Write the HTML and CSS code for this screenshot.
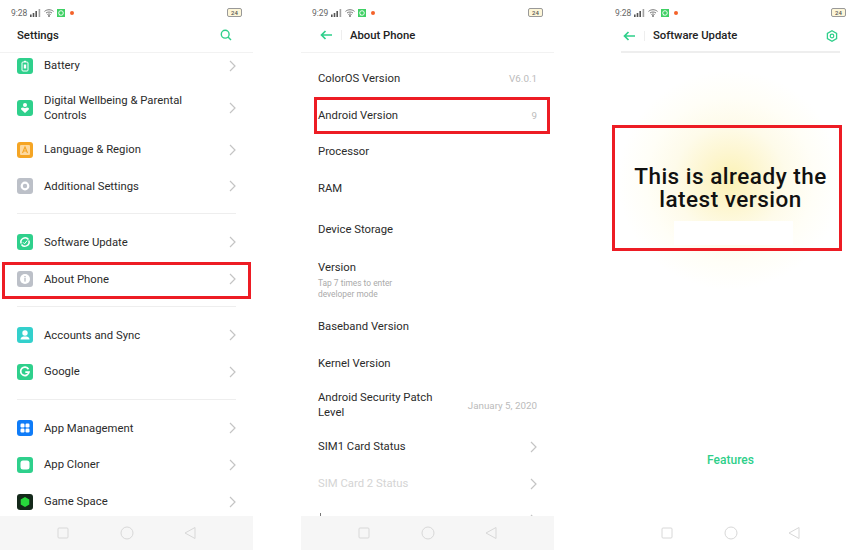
FILE: index.html
```html
<!DOCTYPE html>
<html lang="en">
<head>
    <meta charset="UTF-8">
    <meta name="viewport" content="width=device-width, initial-scale=1.0">
    <title>About Phone steps</title>
    <link rel="stylesheet" href="styles.css">
</head>
<body>
    <svg class="sprites" width="0" height="0">
        <symbol id="signal" viewBox="0 0 11 8">
            <rect x="0" y="5.5" width="1.6" height="2.5"/>
            <rect x="2.7" y="4" width="1.6" height="4"/>
            <rect x="5.4" y="2" width="1.6" height="6"/>
            <rect x="8.6" y="0" width="1.6" height="8" opacity=".55"/>
        </symbol>
        <symbol id="wifi" viewBox="0 0 10 8">
            <path d="M.5 2.4C3 .2 7 .2 9.500 2.400M2 4C3.700 2.700 6.300 2.700 8 4M3.400 5.500C4.300 4.900 5.700 4.900 6.600 5.500" fill="none" stroke="#666" stroke-width=".9"/>
            <circle cx="5" cy="7" r=".9" fill="#666"/>
        </symbol>
        <symbol id="chat" viewBox="0 0 8 8">
            <rect width="8" height="8" fill="#3fd064"/>
            <circle cx="4" cy="4" r="2.300" fill="none" stroke="#fff" stroke-width=".9"/>
            <path d="M1.700 6.500 2.200 5 3.200 6Z" fill="#fff"/>
        </symbol>
        <symbol id="chevron" viewBox="0 0 7 12">
            <path d="M1 1 6 6 1 11" fill="none" stroke="#c4c4c4" stroke-width="1.200"/>
        </symbol>
        <symbol id="back" viewBox="0 0 12 10">
            <path d="M5.500 1 1.500 5 5.500 9M1.500 5H12" fill="none" stroke="#2ecf8a" stroke-width="1.700"/>
        </symbol>
        <symbol id="square" viewBox="0 0 14 14">
            <rect x="2" y="2" width="10" height="10" rx="1" fill="none" stroke="#d8d8d8"/>
        </symbol>
        <symbol id="circle" viewBox="0 0 14 14">
            <circle cx="7" cy="7" r="6" fill="none" stroke="#d8d8d8"/>
        </symbol>
        <symbol id="triangle" viewBox="0 0 14 14">
            <path d="M12 1.500V12.500L2 7Z" fill="none" stroke="#d8d8d8"/>
        </symbol>
    </svg>

    <div class="screen screen-settings">
        <div class="status">
            <span class="time">9:28</span>
            <svg class="signal"><use href="#signal"/></svg>
            <svg class="wifi"><use href="#wifi"/></svg>
            <svg class="chat"><use href="#chat"/></svg>
            <span class="dot"></span>
            <span class="battery">24</span>
        </div>
        <div class="header">
            <span class="title title-plain">Settings</span>
            <svg class="header-icon" viewBox="0 0 12 12"><circle cx="5.200" cy="5.200" r="3.900" fill="none" stroke="#2ecf8a" stroke-width="1.400"/><path d="M8 8 11 11" stroke="#2ecf8a" stroke-width="1.400"/></svg>
        </div>
        <div class="list settings-list">
            <div class="row">
                <span class="app-icon green"><svg viewBox="0 0 16 16"><rect x="5" y="4" width="6" height="9" rx="1" fill="none" stroke="#fff"/><rect x="7" y="2.800" width="2" height="1.200" fill="#fff"/><rect x="6.800" y="6.500" width="2.400" height="4" fill="#fff"/></svg></span>
                <span class="label">Battery</span>
                <svg class="chevron"><use href="#chevron"/></svg>
            </div>
            <div class="row row-two">
                <span class="app-icon green"><svg viewBox="0 0 16 16"><circle cx="8" cy="5" r="2" fill="#fff"/><path d="M8 13 4.200 9.500C3.400 8 5.500 6.800 8 8.200 10.500 6.800 12.600 8 11.800 9.500Z" fill="#fff"/></svg></span>
                <span class="label">Digital Wellbeing &amp; Parental Controls</span>
                <svg class="chevron"><use href="#chevron"/></svg>
            </div>
            <div class="row">
                <span class="app-icon orange"><svg viewBox="0 0 16 16"><rect x="3" y="3" width="10" height="10" rx="1" fill="#fdd9a0"/><path d="M5.500 11 8 5 10.500 11M6.400 9H9.600" fill="none" stroke="#f5a524" stroke-width="1.100"/></svg></span>
                <span class="label">Language &amp; Region</span>
                <svg class="chevron"><use href="#chevron"/></svg>
            </div>
            <div class="row">
                <span class="app-icon grey"><svg viewBox="0 0 16 16"><circle cx="8" cy="8" r="3.300" fill="none" stroke="#fff" stroke-width="2.200"/></svg></span>
                <span class="label">Additional Settings</span>
                <svg class="chevron"><use href="#chevron"/></svg>
            </div>
            <div class="divider"></div>
            <div class="row">
                <span class="app-icon green"><svg viewBox="0 0 16 16"><path d="M4.200 9.500A4.200 4.200 0 0 1 11.500 5.500M11.800 6.500A4.200 4.200 0 0 1 4.500 10.500" fill="none" stroke="#fff" stroke-width="1.500"/><path d="M6 8.300 7.500 9.800 10.200 6.500" fill="none" stroke="#fff"/></svg></span>
                <span class="label">Software Update</span>
                <svg class="chevron"><use href="#chevron"/></svg>
            </div>
            <div class="row">
                <span class="app-icon grey"><svg viewBox="0 0 16 16"><circle cx="8" cy="8" r="5" fill="#fff"/><rect x="7.300" y="7" width="1.400" height="3.600" fill="#bcc0c8"/><rect x="7.300" y="5" width="1.400" height="1.300" fill="#bcc0c8"/></svg></span>
                <span class="label">About Phone</span>
                <svg class="chevron"><use href="#chevron"/></svg>
            </div>
            <div class="divider"></div>
            <div class="row">
                <span class="app-icon teal"><svg viewBox="0 0 16 16"><circle cx="8" cy="6" r="2.700" fill="#fff"/><path d="M3.500 12.500C3.500 10 6 9.500 8 9.500S12.500 10 12.500 12.500Z" fill="#fff"/></svg></span>
                <span class="label">Accounts and Sync</span>
                <svg class="chevron"><use href="#chevron"/></svg>
            </div>
            <div class="row">
                <span class="app-icon green"><svg viewBox="0 0 16 16"><path d="M11.500 5.200A4.200 4.200 0 1 0 12 8.200H8.300" fill="none" stroke="#fff" stroke-width="1.700"/></svg></span>
                <span class="label">Google</span>
                <svg class="chevron"><use href="#chevron"/></svg>
            </div>
            <div class="divider"></div>
            <div class="row">
                <span class="app-icon blue"><svg viewBox="0 0 16 16"><rect x="3.500" y="3.500" width="4" height="4" rx="1.200" fill="#fff"/><rect x="8.500" y="3.500" width="4" height="4" rx="1.200" fill="#fff"/><rect x="3.500" y="8.500" width="4" height="4" rx="1.200" fill="#fff"/><rect x="8.500" y="8.500" width="4" height="4" rx="1.200" fill="#fff"/></svg></span>
                <span class="label">App Management</span>
                <svg class="chevron"><use href="#chevron"/></svg>
            </div>
            <div class="row">
                <span class="app-icon green"><svg viewBox="0 0 16 16"><rect x="3.500" y="3.500" width="9" height="9" rx="2.500" fill="#fff"/></svg></span>
                <span class="label">App Cloner</span>
                <svg class="chevron"><use href="#chevron"/></svg>
            </div>
            <div class="row">
                <span class="app-icon dark"><svg viewBox="0 0 16 16"><path d="M8 3 12.300 5.500V10.500L8 13 3.700 10.500V5.500Z" fill="#27d83c"/></svg></span>
                <span class="label">Game Space</span>
                <svg class="chevron"><use href="#chevron"/></svg>
            </div>
        </div>
        <div class="nav">
            <svg class="nav-icon"><use href="#square"/></svg>
            <svg class="nav-icon"><use href="#circle"/></svg>
            <svg class="nav-icon"><use href="#triangle"/></svg>
        </div>
        <div class="mark mark-about"></div>
    </div>

    <div class="screen screen-about">
        <div class="status">
            <span class="time">9:29</span>
            <svg class="signal"><use href="#signal"/></svg>
            <svg class="wifi"><use href="#wifi"/></svg>
            <svg class="chat"><use href="#chat"/></svg>
            <span class="dot"></span>
            <span class="battery">24</span>
        </div>
        <div class="header">
            <svg class="back"><use href="#back"/></svg>
            <span class="title">About Phone</span>
        </div>
        <div class="list about-list">
            <div class="row"><span class="label">ColorOS Version</span><span class="value">V6.0.1</span></div>
            <div class="row"><span class="label">Android Version</span><span class="value">9</span></div>
            <div class="row"><span class="label">Processor</span></div>
            <div class="row"><span class="label">RAM</span></div>
            <div class="row row-storage"><span class="label">Device Storage</span></div>
            <div class="row row-version">
                <span class="label">Version<small class="hint">Tap 7 times to enter developer mode</small></span>
            </div>
            <div class="row"><span class="label">Baseband Version</span></div>
            <div class="row"><span class="label">Kernel Version</span></div>
            <div class="row row-two"><span class="label label-patch">Android Security Patch Level</span><span class="value">January 5, 2020</span></div>
            <div class="row"><span class="label">SIM1 Card Status</span><svg class="chevron"><use href="#chevron"/></svg></div>
            <div class="row row-off"><span class="label">SIM Card 2 Status</span><svg class="chevron"><use href="#chevron"/></svg></div>
            <div class="row row-peek"><span class="label"><i class="tick"></i></span><svg class="chevron"><use href="#chevron"/></svg></div>
        </div>
        <div class="nav">
            <svg class="nav-icon"><use href="#square"/></svg>
            <svg class="nav-icon"><use href="#circle"/></svg>
            <svg class="nav-icon"><use href="#triangle"/></svg>
        </div>
        <div class="mark mark-android"></div>
    </div>

    <div class="screen screen-update">
        <div class="status">
            <span class="time">9:28</span>
            <svg class="signal"><use href="#signal"/></svg>
            <svg class="wifi"><use href="#wifi"/></svg>
            <svg class="chat"><use href="#chat"/></svg>
            <span class="dot"></span>
            <span class="battery">24</span>
        </div>
        <div class="header">
            <svg class="back"><use href="#back"/></svg>
            <span class="title">Software Update</span>
            <svg class="header-icon" viewBox="0 0 12 12"><path d="M6 .8 10.600 3.400V8.600L6 11.200 1.400 8.600V3.400Z" fill="none" stroke="#2ecf8a" stroke-width="1.300"/><circle cx="6" cy="6" r="1.800" fill="none" stroke="#2ecf8a" stroke-width="1.200"/></svg>
        </div>
        <div class="update-body">
            <p class="update-message">This is already the latest version</p>
            <div class="update-patch"></div>
            <p class="features">Features</p>
        </div>
        <div class="nav nav-white">
            <svg class="nav-icon"><use href="#square"/></svg>
            <svg class="nav-icon"><use href="#circle"/></svg>
            <svg class="nav-icon"><use href="#triangle"/></svg>
        </div>
        <div class="mark mark-update"></div>
    </div>
</body>
</html>
```
FILE: styles.css
```css
html, body {
    height: 550px;
    overflow: hidden;
}
body {
    margin: 0;
    display: flex;
    width: 857px;
    background: #fff;
    font-family: 'Roboto', sans-serif;
    color: #2b2b2b;
}
.sprites {
    position: absolute;
}
.screen {
    position: relative;
    display: flex;
    flex-direction: column;
    flex: none;
    width: 253px;
    height: 550px;
}
.screen-about {
    margin-left: 48px;
}
.screen-update {
    margin-left: 50px;
}

/* status bar */
.status {
    display: flex;
    align-items: center;
    height: 25px;
    padding: 0 11px;
    box-sizing: border-box;
    flex: none;
}
.time {
    width: 19px;
    font-size: 8.500px;
    color: #666;
}
.signal {
    width: 11px;
    height: 8px;
    fill: #555;
}
.wifi {
    width: 10px;
    height: 8px;
    margin-left: 3px;
}
.chat {
    width: 8px;
    height: 8px;
    margin-left: 3px;
}
.dot {
    width: 4px;
    height: 4px;
    margin-left: 5px;
    border-radius: 50%;
    background: #f4622a;
}
.battery {
    margin-left: auto;
    width: 13px;
    height: 7px;
    border: 1px solid #999;
    border-radius: 2px;
    background: #fdf6d8;
    color: #555;
    font-size: 6px;
    font-weight: 500;
    line-height: 7px;
    text-align: center;
}

/* title bar */
.header {
    display: flex;
    align-items: center;
    height: 20px;
    padding: 0 19px 7px;
    border-bottom: 1px solid #f2f2f2;
    flex: none;
}
.screen-settings .header {
    padding-right: 21px;
}
.title {
    padding-left: 9px;
    margin-left: 9px;
    font-size: 11.300px;
    font-weight: 500;
    color: #222;
    background: linear-gradient(#eee, #eee) no-repeat left center / 1px 10px;
}
.title-plain {
    margin-left: -2px;
    padding-left: 0;
    background: none;
}
.back {
    width: 12px;
    height: 10px;
}
.header-icon {
    width: 12px;
    height: 12px;
    margin-left: auto;
}

/* rows */
.list {
    flex: 1;
    min-height: 0;
    overflow: hidden;
}
.settings-list .row:first-child {
    margin-top: -5.600px;
}
.about-list {
    padding-top: 7.200px;
}
.row {
    display: flex;
    align-items: center;
    height: 36.700px;
    padding: 0 17px;
    font-size: 11.300px;
    line-height: 15px;
}
.row-two {
    height: 47.100px;
}
.row-storage {
    height: 45px;
}
.row-version {
    height: 56.200px;
}
.row-off {
    color: #d4d4d4;
}
.label {
    flex: 1;
    min-width: 0;
    padding-right: 30px;
}
.label-patch {
    flex: none;
    width: 135px;
    padding-right: 0;
}
.hint {
    display: block;
    width: 90px;
    margin-top: 3px;
    font-size: 8.400px;
    line-height: 11px;
    color: #aaa;
}
.value {
    margin-left: auto;
    font-size: 9.800px;
    color: #bbb;
}
.chevron {
    flex: none;
    width: 7px;
    height: 12px;
}
.divider {
    height: 1px;
    margin: 8.500px 17px 10px;
    background: #eee;
}
.tick {
    display: block;
    width: 1px;
    height: 14px;
    margin-left: 2px;
    background: #777;
}
.app-icon {
    flex: none;
    width: 16px;
    height: 16px;
    margin-right: 11px;
    border-radius: 3px;
}
.app-icon svg {
    display: block;
}
.green { background: #2fd08c; }
.orange { background: #f5a524; }
.grey { background: #bcc0c8; }
.teal { background: #33d0cc; }
.blue { background: #0f7cf8; }
.dark { background: #14291a; }

/* nav bar */
.nav {
    display: flex;
    justify-content: center;
    align-items: center;
    gap: 49.500px;
    height: 34px;
    flex: none;
    background: #f6f6f6;
}
.nav-white {
    background: #fff;
}
.nav-icon {
    width: 14px;
    height: 14px;
}

/* software update */
.update-body {
    flex: 1;
    display: flex;
    flex-direction: column;
    align-items: center;
    padding-top: 111.500px;
    background: radial-gradient(ellipse 112px 110px at 126px 127px, #fbf2b4 0%, #fdf6d0 25%, #fefbea 50%, #fffef7 75%, #fff 100%);
}
.update-message {
    width: 210px;
    margin: 0;
    font-size: 22.500px;
    font-weight: 500;
    letter-spacing: .5px;
    line-height: 23px;
    text-align: center;
    color: #111;
}
.update-patch {
    flex: none;
    width: 119px;
    height: 24px;
    margin: 10.500px 0 0 6px;
    background: #fff;
}
.features {
    margin: 208px 0 0;
    font-size: 12px;
    font-weight: 500;
    line-height: 14px;
    color: #2ecf8a;
}
.screen-update .header {
    border-bottom: 0;
    background: linear-gradient(#eee, #eee) no-repeat center bottom / 219px 2px;
    height: 21px;
}

/* red highlight boxes drawn over the screens */
.mark {
    position: absolute;
    box-sizing: border-box;
    border: 3px solid #ed1c24;
}
.mark-about {
    left: 2px;
    top: 262px;
    width: 249px;
    height: 37px;
}
.mark-android {
    left: 13px;
    top: 97px;
    width: 236px;
    height: 37px;
}
.mark-update {
    left: 8px;
    top: 125px;
    width: 230px;
    height: 126px;
}
```
